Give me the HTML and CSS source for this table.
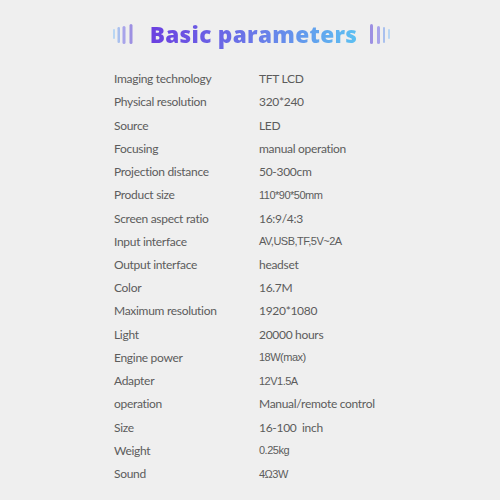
FILE: index.html
```html
<!DOCTYPE html>
<html>
<head>
<meta charset="utf-8">
<link rel="stylesheet" href="styles.css">
</head>
<body>
<div class="page">
  <div class="title-row">
    <svg class="bars bars-left" width="20" height="22" viewBox="0 0 20 22">
      <rect x="0" y="5" width="2" height="10" rx="1" fill="#b9d6f3"/>
      <rect x="4.5" y="3" width="2.5" height="16" rx="1.2" fill="#a9c0ee"/>
      <rect x="9.5" y="2" width="3" height="18" rx="1.5" fill="#a8a4ea"/>
      <rect x="16.5" y="0" width="3" height="20" rx="1.5" fill="#9d90e2"/>
    </svg>
    <h1 class="title">Basic parameters</h1>
    <svg class="bars bars-right" width="20" height="22" viewBox="0 0 20 22">
      <rect x="0" y="0" width="3" height="20" rx="1.5" fill="#9d90e2"/>
      <rect x="7" y="2" width="3" height="18" rx="1.5" fill="#a8a4ea"/>
      <rect x="13" y="3" width="2" height="16" rx="1" fill="#a9c0ee"/>
      <rect x="18" y="5" width="2" height="10" rx="1" fill="#b9d6f3"/>
    </svg>
  </div>
  <div class="table">
    <div class="row"><span class="k">Imaging technology</span><span class="v">TFT LCD</span></div>
    <div class="row"><span class="k">Physical resolution</span><span class="v">320*240</span></div>
    <div class="row"><span class="k">Source</span><span class="v">LED</span></div>
    <div class="row"><span class="k">Focusing</span><span class="v">manual operation</span></div>
    <div class="row"><span class="k">Projection distance</span><span class="v">50-300cm</span></div>
    <div class="row"><span class="k">Product size</span><span class="v n">110*90*50mm</span></div>
    <div class="row"><span class="k">Screen aspect ratio</span><span class="v">16:9/4:3</span></div>
    <div class="row"><span class="k">Input interface</span><span class="v n">AV,USB,TF,5V~2A</span></div>
    <div class="row"><span class="k">Output interface</span><span class="v">headset</span></div>
    <div class="row"><span class="k">Color</span><span class="v">16.7M</span></div>
    <div class="row"><span class="k">Maximum resolution</span><span class="v">1920*1080</span></div>
    <div class="row"><span class="k">Light</span><span class="v">20000 hours</span></div>
    <div class="row"><span class="k">Engine power</span><span class="v n">18W(max)</span></div>
    <div class="row"><span class="k">Adapter</span><span class="v n">12V1.5A</span></div>
    <div class="row"><span class="k">operation</span><span class="v">Manual/remote control</span></div>
    <div class="row"><span class="k">Size</span><span class="v">16-100&nbsp; inch</span></div>
    <div class="row"><span class="k">Weight</span><span class="v n">0.25kg</span></div>
    <div class="row"><span class="k">Sound</span><span class="v n">4Ω3W</span></div>
  </div>
</div>
</body>
</html>
```
FILE: styles.css
```css
html, body {
  margin: 0;
  padding: 0;
  background: #efefef;
}
.page {
  width: 500px;
  height: 500px;
  box-sizing: border-box;
  padding-top: 21px;
  font-family: "Lato", "Noto Sans", sans-serif;
  color: #5c5c5c;
}
.title-row {
  display: flex;
  align-items: center;
  justify-content: center;
  height: 28px;
  padding-left: 3px;
}
.bars { display: block; }
.bars-left { margin-right: 17px; }
.bars-right { margin-left: 13px; }
.title {
  margin: 0;
  font-family: "Open Sans", "Noto Sans", sans-serif;
  font-weight: 800;
  font-size: 22.6px;
  line-height: 28px;
  letter-spacing: 0.3px;
  background: linear-gradient(90deg, #6b3fe0 0%, #6a78e8 50%, #5cc0f2 100%);
  -webkit-background-clip: text;
  background-clip: text;
  color: transparent;
}
.table {
  margin-top: 18px;
  padding-left: 114px;
}
.row {
  display: flex;
  height: 23.24px;
  align-items: center;
  font-size: 12px;
  letter-spacing: -0.3px;
}
.k {
  width: 145px;
  flex: none;
}
.v.n {
  font-family: "Liberation Sans", Arial, sans-serif;
  font-size: 11px;
  letter-spacing: -0.5px;
}
```
